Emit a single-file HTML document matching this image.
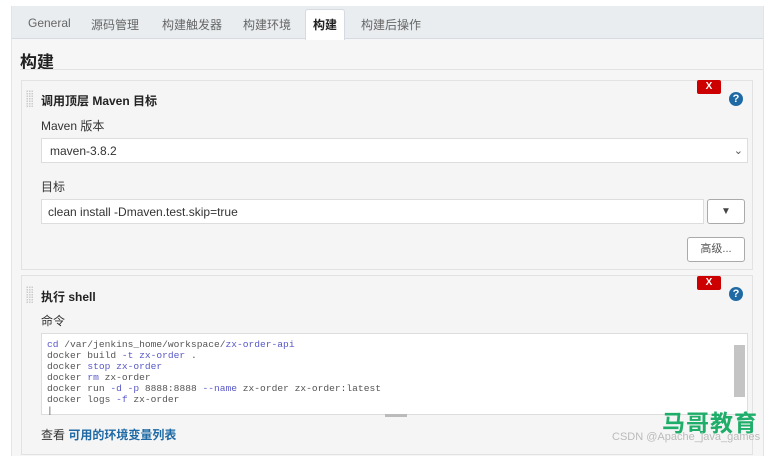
<!DOCTYPE html>
<html><head><meta charset="utf-8"><style>
*{margin:0;padding:0;box-sizing:border-box}
body{width:780px;height:449px;background:#fff;font-family:"Liberation Sans","Noto Sans CJK SC",sans-serif;font-size:12px;color:#333;position:relative;overflow:hidden}
.a{position:absolute}
.panel{left:11px;top:6px;width:753px;height:450px;background:#f6f6f6;border-left:1px solid #e4e4e4;border-right:1px solid #e4e4e4}
.tabs{left:12px;top:6px;width:751px;height:33px;background:#e9edf0;border-bottom:1px solid #d5dbe0}
.tab{position:absolute;top:16px;color:#666;font-size:12px}
.box{border:1px solid #e2e2e2;background:#f5f5f5}
.grip{width:7px;height:18px;background-image:radial-gradient(#ccc 0.8px,transparent 1px);background-size:2.5px 2.5px}
.x{width:24px;height:14px;background:#cc0000;color:#fff;font-weight:bold;font-size:10px;text-align:center;line-height:14px;border-radius:2px}
.q{width:14px;height:14px;border-radius:50%;background:#1f6aa5;color:#fff;font-weight:bold;font-size:11px;text-align:center;line-height:14px}
.inp{background:#fff;border:1px solid #ddd;font-size:12px;color:#333;padding-left:6px;line-height:22px}
pre{font-family:"Liberation Mono","DejaVu Sans Mono",monospace;font-size:9.6px;line-height:11px;color:#555}
.k{color:#5858c8}
</style></head><body>
<div class="a panel"></div>
<div class="a tabs"></div>
<div class="a tab" style="left:28px">General</div>
<div class="a tab" style="left:91px">源码管理</div>
<div class="a tab" style="left:162px">构建触发器</div>
<div class="a tab" style="left:243px">构建环境</div>
<div class="a" style="left:305px;top:9px;width:40px;height:31px;background:#fff;border:1px solid #d5dbe0;border-bottom:none;border-radius:3px 3px 0 0"></div>
<div class="a tab" style="left:313px;color:#222;font-weight:bold">构建</div>
<div class="a tab" style="left:361px">构建后操作</div>
<div class="a" style="left:20px;top:48px;font-size:17px;font-weight:bold;color:#222">构建</div>
<div class="a" style="left:20px;top:69px;width:743px;height:1px;background:#e2e2e2"></div>

<div class="a box" style="left:21px;top:80px;width:732px;height:190px"></div>
<div class="a grip" style="left:26px;top:90px"></div>
<div class="a" style="left:41px;top:92px;font-weight:bold;color:#222">调用顶层 Maven 目标</div>
<div class="a x" style="left:697px;top:80px">X</div>
<div class="a q" style="left:729px;top:92px">?</div>
<div class="a" style="left:41px;top:117px;color:#333">Maven 版本</div>
<div class="a inp" style="left:41px;top:138px;width:707px;height:25px;padding-left:8px;line-height:24px">maven-3.8.2<span style="position:absolute;right:4px;top:0;font-size:11px;color:#555">&#8964;</span></div>
<div class="a" style="left:41px;top:178px">目标</div>
<div class="a inp" style="left:41px;top:199px;width:663px;height:25px;line-height:24px">clean install -Dmaven.test.skip=true</div>
<div class="a" style="left:707px;top:199px;width:38px;height:25px;background:#fff;border:1px solid #aaa;border-radius:3px;text-align:center;line-height:23px;font-size:10px;color:#444">▼</div>
<div class="a" style="left:687px;top:237px;width:58px;height:25px;background:#fff;border:1px solid #aaa;border-radius:3px;text-align:center;line-height:23px;font-size:11px;color:#555">高级...</div>

<div class="a box" style="left:21px;top:275px;width:732px;height:180px"></div>
<div class="a grip" style="left:26px;top:286px"></div>
<div class="a" style="left:41px;top:288px;font-weight:bold;color:#222">执行 shell</div>
<div class="a x" style="left:697px;top:276px">X</div>
<div class="a q" style="left:729px;top:287px">?</div>
<div class="a" style="left:41px;top:312px">命令</div>
<div class="a" style="left:41px;top:333px;width:707px;height:82px;background:#fff;border:1px solid #ddd"></div>
<div class="a" style="left:734px;top:345px;width:11px;height:52px;background:#c4c4c4"></div>
<div class="a" style="left:385px;top:414px;width:22px;height:3px;background:#bbb"></div>
<pre class="a" style="left:47px;top:339px"><span class="k">cd</span> /var/jenkins_home/workspace/<span class="k">zx-order-api</span>
docker build <span class="k">-t zx-order</span> .
docker <span class="k">stop zx-order</span>
docker <span class="k">rm</span> zx-order
docker run <span class="k">-d -p</span> 8888:8888 <span class="k">--name</span> zx-order zx-order:latest
docker logs <span class="k">-f</span> zx-order
|</pre>
<div class="a" style="left:41px;top:426px">查看 <span style="color:#1f6aa5;font-weight:bold">可用的环境变量列表</span></div>
<div class="a" style="left:662px;top:404px;font-size:23px;font-weight:bold;color:#1fae6a;letter-spacing:1px">马哥教育</div>
<div class="a" style="left:612px;top:431px;font-size:11px;color:#bbb">CSDN @Apache_java_games</div>
</body></html>
